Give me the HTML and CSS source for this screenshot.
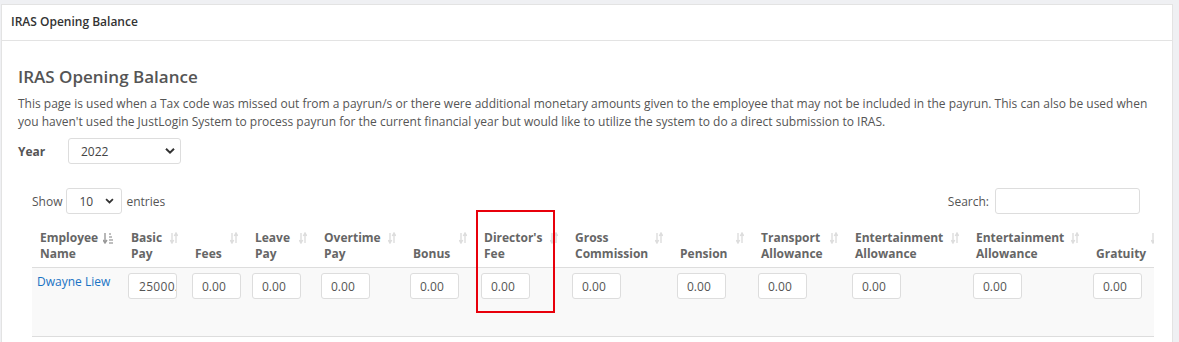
FILE: index.html
```html
<!DOCTYPE html>
<html>
<head>
<title>IRAS Opening Balance</title>
<link rel="stylesheet" href="styles.css">
</head>
<body>
<div class="panel">
  <div class="panel-heading">IRAS Opening Balance</div>
  <div class="panel-body">
    <h3>IRAS Opening Balance</h3>
    <p class="intro">This page is used when a Tax code was missed out from a payrun/s or there were additional monetary amounts given to the employee that may not be included in the payrun. This can also be used when you haven't used the JustLogin System to process payrun for the current financial year but would like to utilize the system to do a direct submission to IRAS.</p>
    <div class="year-row">
      <label>Year</label>
      <div class="select-wrap year-select">
        <select><option>2022</option></select>
        <svg class="chev" width="10" height="7" viewBox="0 0 10 7"><path d="M1 1.2 L5 5.2 L9 1.2" fill="none" stroke="#333" stroke-width="2"/></svg>
      </div>
    </div>

    <div class="dt-wrapper">
      <div class="dt-controls">
        <div class="dt-length">Show
          <div class="select-wrap len-select">
            <select><option>10</option></select>
            <svg class="chev" width="9" height="6" viewBox="0 0 10 7"><path d="M1 1.2 L5 5.2 L9 1.2" fill="none" stroke="#333" stroke-width="2"/></svg>
          </div>
          entries
        </div>
        <div class="dt-search">Search: <input type="text"></div>
      </div>

      <table class="dt-table">
        <colgroup>
          <col style="width:91px"><col style="width:64px"><col style="width:60px"><col style="width:69px">
          <col style="width:89px"><col style="width:71px"><col style="width:91px"><col style="width:105px">
          <col style="width:81px"><col style="width:94px"><col style="width:121px"><col style="width:120px">
          <col style="width:80px">
        </colgroup>
        <thead>
          <tr>
            <th class="sorted">Employee<br>Name</th>
            <th>Basic<br>Pay</th>
            <th>Fees</th>
            <th>Leave<br>Pay</th>
            <th>Overtime<br>Pay</th>
            <th>Bonus</th>
            <th>Director's<br>Fee</th>
            <th>Gross<br>Commission</th>
            <th>Pension</th>
            <th>Transport<br>Allowance</th>
            <th>Entertainment<br>Allowance</th>
            <th>Entertainment<br>Allowance</th>
            <th>Gratuity</th>
          </tr>
        </thead>
        <tbody>
          <tr>
            <td><a href="#">Dwayne Liew</a></td>
            <td><input class="amt basic" value="25000.00"></td>
            <td><input class="amt" value="0.00"></td>
            <td><input class="amt" value="0.00"></td>
            <td><input class="amt" value="0.00"></td>
            <td><input class="amt" value="0.00"></td>
            <td><input class="amt" value="0.00"></td>
            <td><input class="amt" value="0.00"></td>
            <td><input class="amt" value="0.00"></td>
            <td><input class="amt" value="0.00"></td>
            <td><input class="amt" value="0.00"></td>
            <td><input class="amt" value="0.00"></td>
            <td><input class="amt" value="0.00"></td>
          </tr>
        </tbody>
      </table>
    </div>
  </div>
</div>
<div class="highlight"></div>
<script>
// sort icons on each header
var ths = document.querySelectorAll('.dt-table th');
for (var i = 0; i < ths.length; i++) {
  var svg;
  if (ths[i].className == 'sorted') {
    svg = '<svg class="sort" width="10" height="12" viewBox="0 0 10 12"><path d="M2 1 V10 M0 8 L2 11 L4 8" fill="none" stroke="#999" stroke-width="1.4"/><path d="M6 2 H8 M6 5 H9 M6 8 H10 M6 11 H10" stroke="#aaa" stroke-width="1.3"/></svg>';
  } else {
    svg = '<svg class="sort" width="8" height="12" viewBox="0 0 8 12"><path d="M2 1 V10 M0.3 8 L2 11 L3.7 8" fill="none" stroke="#ddd" stroke-width="1.4"/><path d="M6 11 V2 M4.3 4 L6 1 L7.7 4" fill="none" stroke="#ddd" stroke-width="1.4"/></svg>';
  }
  ths[i].innerHTML += svg;
}
</script>
</body>
</html>
```

FILE: styles.css
```css
body {margin:0;background:#eff0f3;font-family:"Open Sans",Arial,sans-serif;font-size:12px;color:#555;}

.panel {margin:4px 6px 0 1px;background:#fff;border:1px solid #e3e3e3;border-bottom:none;height:338px;box-sizing:border-box;}
.panel-heading {height:35px;line-height:34px;padding:0 9px;border-bottom:1px solid #e3e3e3;font-weight:600;color:#333;}
.panel-body {padding:0 16px;}

h3 {margin:24px 0 0;font-size:17px;font-weight:600;line-height:24px;color:#555;}
.intro {margin:6px 0 0;line-height:18px;}

.year-row {display:flex;align-items:center;margin-top:7px;}
.year-row label {width:50px;font-weight:700;color:#555;}

.select-wrap {position:relative;}
.select-wrap select {appearance:none;-webkit-appearance:none;height:26px;border:1px solid #ddd;border-radius:3px;background:#fff;
  font-family:"Open Sans",Arial,sans-serif;font-size:12px;color:#444;padding:0 0 0 12px;display:block;}
.select-wrap .chev {position:absolute;top:50%;transform:translateY(-50%);pointer-events:none;}
.year-select select {width:113px;}
.year-select .chev {right:6px;}
.len-select select {width:56px;}
.len-select .chev {right:8px;}

.dt-wrapper {margin:24px 2px 0 14px;overflow:hidden;}
.dt-controls {display:flex;justify-content:space-between;align-items:center;padding-right:14px;}
.dt-length {display:flex;align-items:center;gap:4px;}
.dt-search {display:flex;align-items:center;gap:6px;}
.dt-search input {width:145px;height:26px;box-sizing:border-box;border:1px solid #ddd;border-radius:3px;}

.dt-table {table-layout:fixed;border-collapse:collapse;width:1121px;margin-top:8px;font-size:12px;}
.dt-table th {position:relative;text-align:left;vertical-align:bottom;font-weight:700;color:#666;line-height:16px;
  padding:8px 8px 5px;border-bottom:1px solid #ddd;white-space:nowrap;}
.dt-table th .sort {position:absolute;right:9px;top:10px;}
.dt-table th.sorted .sort {right:10px;}
.dt-table td {background:#f9f9f9;vertical-align:top;padding:5px 5px 0;height:63px;border-bottom:1px solid #ddd;line-height:18px;}
.dt-table td a {color:#1a73c4;text-decoration:none;display:inline-block;margin-top:0;}

.amt {width:49px;height:26px;box-sizing:border-box;border:1px solid #ddd;border-radius:3px;background:#fff;
  font-family:"Open Sans",Arial,sans-serif;font-size:12px;color:#555;padding:0 0 0 9px;display:block;}
.amt.basic {padding-left:10px;letter-spacing:0.3px;}

.highlight {position:absolute;left:476px;top:210px;width:79px;height:103px;box-sizing:border-box;border:2px solid #e8000b;}
```
